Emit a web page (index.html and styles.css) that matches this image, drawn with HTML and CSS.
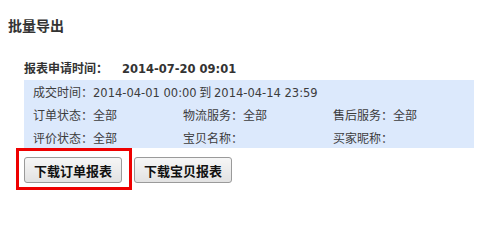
FILE: index.html
```html
<!DOCTYPE html>
<html lang="zh-CN">
<head>
<meta charset="utf-8">
<title>批量导出</title>
<link rel="stylesheet" href="styles.css">
</head>
<body>
<h2 class="title">批量导出</h2>
<div class="section">
  <div class="apply-row">
    <span class="apply-label">报表申请时间：</span><span class="apply-value num">2014-07-20 09:01</span>
  </div>
  <div class="filters">
    <div class="frow">成交时间：<span class="num">2014-04-01 00:00</span> 到 <span class="num">2014-04-14 23:59</span></div>
    <div class="frow grid">
      <span class="cell">订单状态：全部</span>
      <span class="cell">物流服务：全部</span>
      <span class="cell">售后服务：全部</span>
    </div>
    <div class="frow grid">
      <span class="cell">评价状态：全部</span>
      <span class="cell">宝贝名称：</span>
      <span class="cell">买家昵称：</span>
    </div>
  </div>
  <div class="actions">
    <div class="highlight"><button class="btn">下载订单报表</button></div>
    <button class="btn btn-second">下载宝贝报表</button>
  </div>
</div>
</body>
</html>
```
FILE: styles.css
```css
html, body {
  margin: 0;
  padding: 0;
  background: #fff;
}
body {
  padding: 8px;
  font-family: "Noto Sans CJK SC", "DejaVu Sans", sans-serif;
  font-size: 12px;
  color: #333;
}
.title {
  margin: 8px 0 0 0;
  font-size: 14px;
  line-height: 18px;
  font-weight: bold;
  color: #333;
}
.section {
  margin: 22px 0 0 16px;
  width: 450px;
}
.apply-row {
  height: 24px;
  line-height: 24px;
  font-weight: bold;
  color: #333;
}
.apply-label {
  display: inline-block;
  width: 98px;
}
.num {
  font-family: "DejaVu Sans", sans-serif;
  font-size: 11.5px;
}
.filters {
  background: #dce9fc;
  height: 68px;
  padding-left: 9px;
  color: #3c3c3c;
}
.frow {
  line-height: 23px;
  height: 23px;
  white-space: nowrap;
}
.frow.grid {
  display: flex;
}
.cell {
  display: block;
  width: 150px;
  flex: 0 0 150px;
}
.actions {
  display: flex;
  align-items: flex-start;
}
.highlight {
  border: 3px solid #ee0000;
  padding: 6px 7px 4px 5px;
  margin-left: -8px;
}
.btn {
  display: block;
  height: 26px;
  padding: 0 9px;
  margin: 0;
  font-family: "Noto Sans CJK SC", sans-serif;
  font-size: 13px;
  font-weight: bold;
  color: #111;
  background: linear-gradient(#f6f6f6, #e2e2e2);
  border: 1px solid #9a9a9a;
  border-radius: 3px;
  cursor: pointer;
}
.btn-second {
  margin-left: 2px;
  margin-top: 9px;
}
```
